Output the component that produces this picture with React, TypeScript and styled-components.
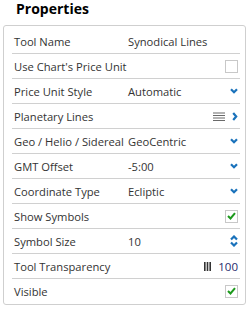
import React from "react";
import styled, { createGlobalStyle } from "styled-components";

const Global = createGlobalStyle`
    html, body {
        margin: 0;
        padding: 0;
        background: #ffffff;
    }
    body {
        font-family: "Open Sans", "Liberation Sans", sans-serif;
    }
`

const Wrapper = styled.div`
    width: 251px;
    height: 309px;
    padding: 0 0 0 3px;
    box-sizing: border-box;
`

const Title = styled.h1`
    margin: 0;
    padding: 0 0 0 13px;
    height: 25px;
    line-height: 18px;
    font-size: 14px;
    font-weight: 700;
    color: #000000;
`

const Panel = styled.div`
    width: 243px;
    box-sizing: border-box;
    border: 1px solid #cfcfcf;
    border-radius: 3px;
    padding: 3px 5px 1px 8px;
`

const Row = styled.div<{ $last?: boolean }>`
    display: flex;
    align-items: center;
    height: 24px;
    padding: 0 2px;
    border-bottom: ${(p) => (p.$last ? "none" : "1px solid #d0d0d0")};
    font-size: 11.2px;
    color: #333333;
`

const Label = styled.div`
    width: 114px;
    flex-shrink: 0;
    white-space: nowrap;
`

const Value = styled.div`
    flex: 1;
    white-space: nowrap;
`

const Controls = styled.div`
    display: flex;
    align-items: center;
    gap: 7px;
    margin-left: auto;
`

const Box = styled.div`
    width: 11px;
    height: 11px;
    border: 1px solid #c8c8c8;
    background: #ffffff;
    display: flex;
    align-items: center;
    justify-content: center;
`

const Number = styled.span`
    color: #1f2a6b;
    font-size: 11.5px;
`

const blue = "#1a72bb";

const ChevronDown = () => (
    <svg width="8" height="6" viewBox="0 0 8 6">
        <path d="M1 1.2 L4 4.2 L7 1.2" fill="none" stroke={blue} strokeWidth="2.2" />
    </svg>
)

const ChevronRight = () => (
    <svg width="6" height="9" viewBox="0 0 6 9">
        <path d="M1.2 1 L4.2 4.5 L1.2 8" fill="none" stroke={blue} strokeWidth="2.2" />
    </svg>
)

const Spinner = () => (
    <svg width="8" height="12" viewBox="0 0 8 12">
        <path d="M1 4.5 L4 1.5 L7 4.5" fill="none" stroke={blue} strokeWidth="2.2" />
        <path d="M1 7.5 L4 10.5 L7 7.5" fill="none" stroke={blue} strokeWidth="2.2" />
    </svg>
)

const Lines = () => (
    <svg width="12" height="9" viewBox="0 0 12 9">
        {[0.5, 3, 5.5, 8].map((y) => (
            <rect key={y} x="0" y={y} width="12" height="1" fill="#6a6a6a" />
        ))}
    </svg>
)

const Bars = () => (
    <svg width="7" height="9" viewBox="0 0 7 9">
        <rect x="0" y="0" width="1.6" height="9" fill="#333" />
        <rect x="2.7" y="0" width="1.6" height="9" fill="#333" />
        <rect x="5.4" y="0" width="1.6" height="9" fill="#333" />
    </svg>
)

const Check = ({ on }: { on?: boolean }) => (
    <Box>
        {on && (
            <svg width="9" height="8" viewBox="0 0 9 8">
                <path d="M1 4 L3.5 6.5 L8 1.2" fill="none" stroke="#1c9a1c" strokeWidth="2" />
            </svg>
        )}
    </Box>
)

type Prop = {
    label: string;
    value?: string;
    control?: React.ReactNode;
}

const rows: Prop[] = [
    { label: "Tool Name", value: "Synodical Lines" },
    { label: "Use Chart's Price Unit", control: <Check /> },
    { label: "Price Unit Style", value: "Automatic", control: <ChevronDown /> },
    { label: "Planetary Lines", control: <><Lines /><ChevronRight /></> },
    { label: "Geo / Helio / Sidereal", value: "GeoCentric", control: <ChevronDown /> },
    { label: "GMT Offset", value: "-5:00", control: <ChevronDown /> },
    { label: "Coordinate Type", value: "Ecliptic", control: <ChevronDown /> },
    { label: "Show Symbols", control: <Check on /> },
    { label: "Symbol Size", value: "10", control: <Spinner /> },
    { label: "Tool Transparency", control: <><Bars /><Number>100</Number></> },
    { label: "Visible", control: <Check on /> },
]

export default function App() {
    return (
        <>
            <Global />
            <Wrapper>
                <Title>Properties</Title>
                <Panel>
                    {rows.map((r, i) => (
                        <Row key={r.label} $last={i === rows.length - 1}>
                            <Label>{r.label}</Label>
                            {r.value && <Value>{r.value}</Value>}
                            {r.control && <Controls>{r.control}</Controls>}
                        </Row>
                    ))}
                </Panel>
            </Wrapper>
        </>
    )
}
